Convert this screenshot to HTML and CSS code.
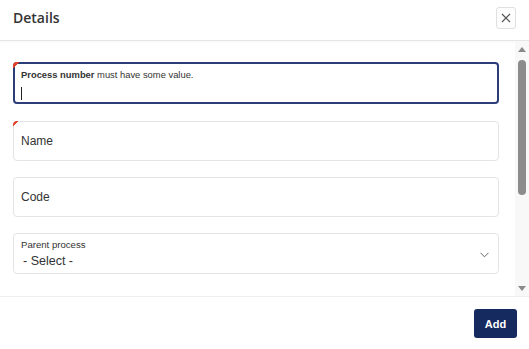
FILE: index.html
```html
<!DOCTYPE html>
<html>
<head>
<meta charset="utf-8">
<link rel="stylesheet" href="styles.css">
</head>
<body>
<div class="dialog">
  <div class="header">
    <div class="title">Details</div>
    <button class="close" aria-label="Close">
      <svg width="10" height="10" viewBox="0 0 10 10"><path d="M1 1L9 9M9 1L1 9" stroke="#555" stroke-width="1.2" fill="none"/></svg>
    </button>
  </div>
  <div class="body">
    <div class="content">
      <div class="field focused required">
        <div class="error"><b>Process number</b> must have some value.</div>
        <div class="caret"></div>
      </div>
      <div class="field required">
        <div class="label">Name</div>
      </div>
      <div class="field">
        <div class="label">Code</div>
      </div>
      <div class="field select">
        <div class="sel-text">
          <div class="small-label">Parent process</div>
          <div class="value">- Select -</div>
        </div>
        <svg class="chev" width="9" height="6" viewBox="0 0 9 6"><path d="M0.5 0.8L4.5 4.8L8.5 0.8" stroke="#666" stroke-width="1" fill="none"/></svg>
      </div>
    </div>
    <div class="scrollbar">
      <div class="arrow up"></div>
      <div class="track"><div class="thumb"></div></div>
      <div class="arrow down"></div>
    </div>
  </div>
  <div class="footer">
    <button class="add">Add</button>
  </div>
</div>
</body>
</html>
```
FILE: styles.css
```css
* { box-sizing: border-box; }
html, body { margin: 0; padding: 0; background: #fff; }
body { font-family: "Liberation Sans", Arial, sans-serif; color: #333; }

.dialog {
  width: 529px;
  height: 349px;
  display: flex;
  flex-direction: column;
  overflow: hidden;
}

.header {
  height: 41px;
  flex: none;
  display: flex;
  align-items: center;
  justify-content: space-between;
  padding: 0 13px 1px 13px;
  border-bottom: 1px solid #e6e6e6;
  box-shadow: 0 1px 2px rgba(0,0,0,0.04);
}
.title {
  font-family: "Open Sans", sans-serif;
  font-weight: 600;
  font-size: 14px;
  color: #333;
  margin-top: -4px;
}
.close {
  width: 20px;
  height: 22px;
  margin-right: 0;
  margin-top: -3px;
  padding: 0;
  background: #fdfdfd;
  border: 1px solid #e0e0e0;
  border-radius: 3px;
  display: flex;
  align-items: center;
  justify-content: center;
}

.body {
  flex: none;
  height: 255px;
  display: flex;
  overflow: hidden;
}
.content {
  flex: 1;
  padding: 21px 16px 0 13px;
  display: flex;
  flex-direction: column;
  gap: 16px;
}

.field {
  position: relative;
  height: 40px;
  border: 1px solid #e4e4e4;
  border-radius: 4px;
  padding: 0 7px;
  display: flex;
  align-items: center;
  flex: none;
}
.field.focused {
  height: 42px;
  border: 2px solid #2c3d78;
  padding: 0 6px;
  flex-direction: column;
  align-items: flex-start;
  justify-content: flex-start;
  margin-bottom: 1px;
}
.field.required::before {
  content: "";
  position: absolute;
  left: -1px;
  top: -1px;
  width: 6px;
  height: 6px;
  background: linear-gradient(135deg, #e2412b 50%, transparent 50%);
  border-top-left-radius: 4px;
}
.field.focused.required::before { left: -2px; top: -2px; }

.error {
  font-size: 9.4px;
  color: #333;
  margin-top: 5px;
}
.error b { font-weight: bold; }
.caret {
  width: 1px;
  height: 13px;
  background: #222;
  margin-top: 7px;
}

.label {
  font-size: 12px;
  color: #333;
}

.field.select {
  height: 41px;
  justify-content: space-between;
  padding-right: 9px;
}
.sel-text {
  display: flex;
  flex-direction: column;
}
.small-label {
  font-size: 9.6px;
  color: #333;
  margin-top: -1px;
}
.value {
  font-size: 12.5px;
  color: #333;
  margin-top: 4px;
  margin-left: 2px;
}
.chev { margin-top: 2px; }

.scrollbar {
  width: 14px;
  flex: none;
  background: #f8f8f8;
  display: flex;
  flex-direction: column;
  align-items: center;
  padding: 6px 0 5px 0;
}
.arrow {
  width: 0;
  height: 0;
  border-left: 4px solid transparent;
  border-right: 4px solid transparent;
  flex: none;
}
.arrow.up { border-bottom: 5px solid #8a8a8a; }
.arrow.down { border-top: 5px solid #8a8a8a; }
.track {
  flex: 1;
  width: 100%;
  display: flex;
  justify-content: center;
  padding-top: 8px;
}
.thumb {
  width: 8px;
  height: 135px;
  background: #8c8c8c;
  border-radius: 4px;
}

.footer {
  flex: 1;
  border-top: 1px solid #eeeeee;
  display: flex;
  justify-content: flex-end;
  align-items: flex-start;
  padding: 12px 12px 0 0;
}
.add {
  width: 43px;
  height: 29px;
  background: #152a5f;
  color: #fff;
  border: none;
  border-radius: 3px;
  font-family: "Liberation Sans", Arial, sans-serif;
  font-weight: bold;
  font-size: 11px;
  padding: 0;
}
```
